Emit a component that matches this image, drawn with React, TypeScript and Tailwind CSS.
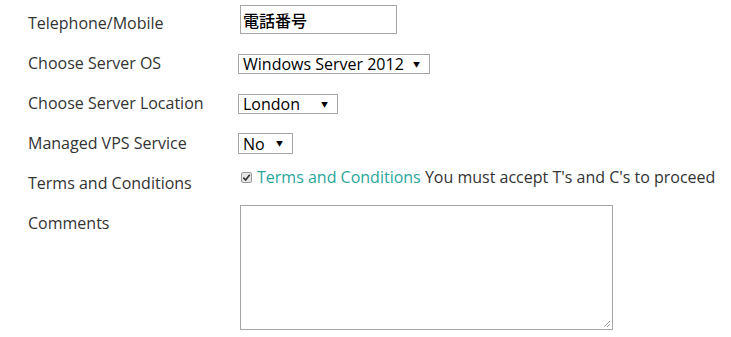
import React from "react";

const font = { fontFamily: "'Open Sans', 'Noto Sans CJK JP', sans-serif" };

function Sel({ label, w }: { label: string; w: string }) {
  return (
    <div className={`flex h-full items-center justify-between border border-[#a6a6a6] bg-white pl-[4px] pr-[9px] text-[16px] leading-none text-black ${w}`}>
      <span>{label}</span>
      <span className="text-[7px]">▼</span>
    </div>
  );
}

export default function App() {
  return (
    <div className="h-[337px] w-[731px] bg-white pt-[5px] text-[16px] text-[#333]" style={font}>
      <div className="flex h-[40px]">
        <div className="mt-[8px] w-[238px] pl-[28px] leading-[20px]">Telephone/Mobile</div>
        <div className="ml-[2px] flex h-[29px] w-[157px] items-center border border-[#a6a6a6] pl-[2px] font-['Noto_Sans_CJK_JP',sans-serif] text-[16px] font-medium text-black">電話番号</div>
      </div>
      <div className="flex h-[40px]">
        <div className="mt-[8px] w-[238px] pl-[28px] leading-[20px]">Choose Server OS</div>
        <div className="mt-[9px] h-[20px]"><Sel label="Windows Server 2012" w="w-[192px]" /></div>
      </div>
      <div className="flex h-[40px]">
        <div className="mt-[8px] w-[238px] pl-[28px] leading-[20px]">Choose Server Location</div>
        <div className="mt-[9px] h-[20px]"><Sel label="London" w="w-[100px]" /></div>
      </div>
      <div className="flex h-[40px]">
        <div className="mt-[8px] w-[238px] pl-[28px] leading-[20px]">Managed VPS Service</div>
        <div className="mt-[8px] h-[21px]"><Sel label="No" w="w-[55px]" /></div>
      </div>
      <div className="flex h-[40px]">
        <div className="mt-[8px] w-[238px] pl-[28px] leading-[20px]">Terms and Conditions</div>
        <div className="ml-[3px] mt-[2px] flex h-[20px] items-center gap-[5px] leading-[20px]">
          <span className="flex h-[11px] w-[11px] items-center justify-center rounded-[2px] border border-[#9a9a9a] bg-[#e6e6e6]">
            <svg viewBox="0 0 10 10" className="h-[9px] w-[9px]"><path d="M1.5 5.2 L4 7.8 L8.6 2" fill="none" stroke="#333" strokeWidth="1.8" /></svg>
          </span>
          <span className="whitespace-nowrap"><span className="text-[#2aa69c]">Terms and Conditions</span> You must accept T's and C's to proceed</span>
        </div>
      </div>
      <div className="flex">
        <div className="mt-[8px] w-[238px] pl-[28px] leading-[20px]">Comments</div>
        <div className="relative ml-[2px] h-[125px] w-[373px] border border-[#a6a6a6] bg-white">
          <svg viewBox="0 0 8 8" className="absolute bottom-[1px] right-[1px] h-[8px] w-[8px]"><path d="M7 1 L1 7 M7 4 L4 7" stroke="#555" strokeWidth="0.9" strokeDasharray="1 0.6" /></svg>
        </div>
      </div>
    </div>
  );
}
